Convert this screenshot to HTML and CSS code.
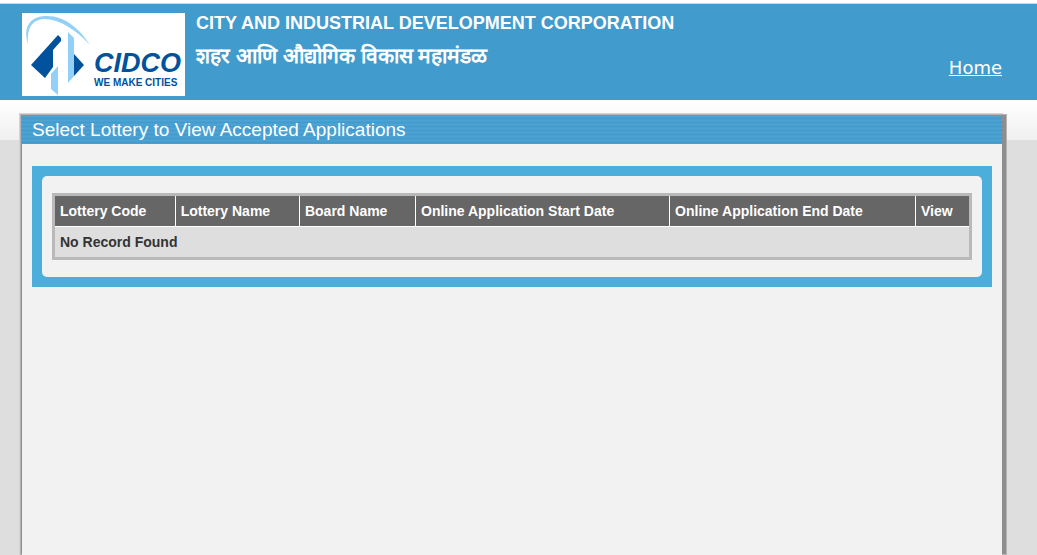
FILE: index.html
```html
<!DOCTYPE html>
<html lang="en">
<head>
<meta charset="utf-8">
<title>CIDCO - Select Lottery</title>
<link rel="stylesheet" href="styles.css">
</head>
<body>
<header class="header">
  <svg class="logo" viewBox="0 0 163 83" role="img" aria-label="CIDCO - We make cities">
    <rect width="163" height="83" fill="#fff"/>
    <path d="M6 31C1 15 7 4 23 3C42 2 57 15 68 32C54 17 38 6 22 6C9 7 5 16 6 31Z" fill="#93d0f7"/>
    <path d="M9 52L36 22L39 25V28L31 37V54L23 65Z" fill="#00529c"/>
    <path d="M52 41L62 52L52 63Z" fill="#00529c"/>
    <path d="M46 19L52 25V63L46 70Z" fill="#93d0f7"/>
    <path d="M29 61L36 53V82L29 76Z" fill="#93d0f7"/>
    <text class="logo-name" x="72" y="59">CIDCO</text>
    <text class="logo-tagline" x="72" y="73">WE MAKE CITIES</text>
  </svg>
  <div class="titles">
    <h1 class="org">CITY AND INDUSTRIAL DEVELOPMENT CORPORATION</h1>
    <p class="org-local" lang="mr">शहर आणि औद्योगिक विकास महामंडळ</p>
  </div>
  <a class="home" href="#">Home</a>
</header>
<main class="page">
  <h2 class="page-title">Select Lottery to View Accepted Applications</h2>
  <section class="panel">
    <div class="panel-body">
      <table class="grid">
        <colgroup>
          <col class="col-code"><col class="col-name"><col class="col-board">
          <col class="col-start"><col class="col-end"><col class="col-view">
        </colgroup>
        <thead>
          <tr>
            <th scope="col">Lottery Code</th>
            <th scope="col">Lottery Name</th>
            <th scope="col">Board Name</th>
            <th scope="col">Online Application Start Date</th>
            <th scope="col">Online Application End Date</th>
            <th scope="col">View</th>
          </tr>
        </thead>
        <tbody>
          <tr><td colspan="6">No Record Found</td></tr>
        </tbody>
      </table>
    </div>
  </section>
</main>
</body>
</html>
```

FILE: styles.css
```css
* { box-sizing: border-box; }
body {
  margin: 0;
  min-height: 100vh;
  display: flex;
  flex-direction: column;
  border-top: 3px solid #fff;
  background: linear-gradient(#fff 100px, #f0f0f0 140px, #dedede 140px);
  font-family: "Liberation Sans", Arial, sans-serif;
}
.header {
  display: flex;
  padding: 9px 35px 4px 22px;
  border-top: 1px solid #d6d6d6;
  background: #419bcc;
  color: #fff;
}
.logo { width: 163px; height: 83px; flex: none; }
.logo-name { font-size: 27px; font-weight: bold; font-style: italic; fill: #00529c; }
.logo-tagline { font-size: 10px; font-weight: bold; fill: #00529c; }
.titles { flex: 1; padding-left: 11px; }
.org { margin: 0; font-size: 18px; line-height: 20px; }
.org-local { margin: 8px 0 0; font-size: 21px; font-weight: bold; line-height: 30px; }
.home {
  align-self: flex-end;
  margin-bottom: 18px;
  color: #fff;
  font-family: "DejaVu Sans", Verdana, sans-serif;
  font-size: 18px;
  line-height: 20px;
}
.page {
  flex: 1;
  margin: 16px 35px 0 22px;
  background: #f2f2f2;
  box-shadow: 0 -1px 0 #8e8e8e, 4px -1px 0 #8e8e8e, -1px -1px 0 #8e8e8e, 4px -1px 0 1px #b4b4b4, -1px -1px 0 1px #b4b4b4, -1px -1px 0 2px #d4d4d4;
}
.page-title {
  margin: 0;
  padding: 0 10px;
  background: repeating-linear-gradient(#4fa3d4 0 1px, #489fd0 1px 2px, #419bcc 2px 3px, #489fd0 3px 4px);
  color: #fff;
  font-size: 19px;
  font-weight: normal;
  line-height: 28px;
}
.panel { margin: 22px 10px 0; padding: 10px; background: #4caedb; }
.panel-body { padding: 17px 10px; border-radius: 5px; background: #f2f2f2; }
.grid {
  width: 100%;
  table-layout: fixed;
  border: 3px solid #b9b9b9;
  border-spacing: 0;
  font-size: 14px;
  line-height: 16px;
}
.grid th, .grid td { padding: 7px 5px; text-align: left; font-weight: bold; }
.grid th {
  border-right: 1px solid #fff;
  border-bottom: 1px solid #fff;
  background: #666;
  color: #fff;
}
.grid th:last-child { border-right: 0; }
.grid td { background: #dedede; color: #333; }
.col-code { width: 13.2%; }
.col-name { width: 13.6%; }
.col-board { width: 12.7%; }
.col-start { width: 27.8%; }
.col-end { width: 26.9%; }
.col-view { width: 5.8%; }
```
